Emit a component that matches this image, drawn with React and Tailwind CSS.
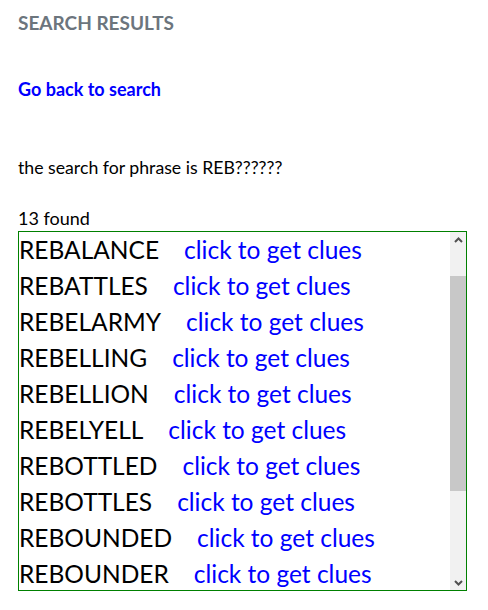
const words = [
  'REBALANCE',
  'REBATTLES',
  'REBELARMY',
  'REBELLING',
  'REBELLION',
  'REBELYELL',
  'REBOTTLED',
  'REBOTTLES',
  'REBOUNDED',
  'REBOUNDER',
];

function Arrow({ up }) {
  return (
    <div className="flex h-[15px] items-center justify-center">
      <svg width="9" height="6" viewBox="0 0 9 6">
        <path
          d={up ? 'M1 5L4.5 1.5L8 5' : 'M1 1L4.5 4.5L8 1'}
          fill="none"
          stroke="#505050"
          strokeWidth="2"
        />
      </svg>
    </div>
  );
}

export default function App() {
  return (
    <div className="min-h-[610px] bg-white pl-[18px] font-['Lato','Liberation_Sans',sans-serif] text-black">
      {/* Title */}
      <h1 className="pt-[11px] text-[19px] leading-6 font-bold text-[#6c757d]">SEARCH RESULTS</h1>

      {/* Back link */}
      <a href="#" className="mt-[42px] block text-[18px] leading-6 font-bold text-[#0000ff]">
        Go back to search
      </a>

      <p className="mt-[55px] text-[17.7px] leading-6">the search for phrase is REB??????</p>
      <p className="mt-[26px] text-[18px] leading-6">13 found</p>

      {/* Results */}
      <div className="mt-[1px] flex h-[360px] w-[449px] border border-[#008000]">
        <div className="flex-1 overflow-hidden">
          {words.map((w) => (
            <div key={w} className="whitespace-nowrap text-[24.5px] leading-[36px]">
              <span>{w}</span>
              <a href="#" className="ml-[25px] text-[#0000ff]">
                click to get clues
              </a>
            </div>
          ))}
        </div>

        {/* Scrollbar */}
        <div className="flex w-[16px] flex-col bg-[#f1f1f1]">
          <Arrow up />
          <div className="mt-[29px] h-[215px] bg-[#c8c8c8]" />
          <div className="flex-1" />
          <Arrow />
        </div>
      </div>
    </div>
  );
}
